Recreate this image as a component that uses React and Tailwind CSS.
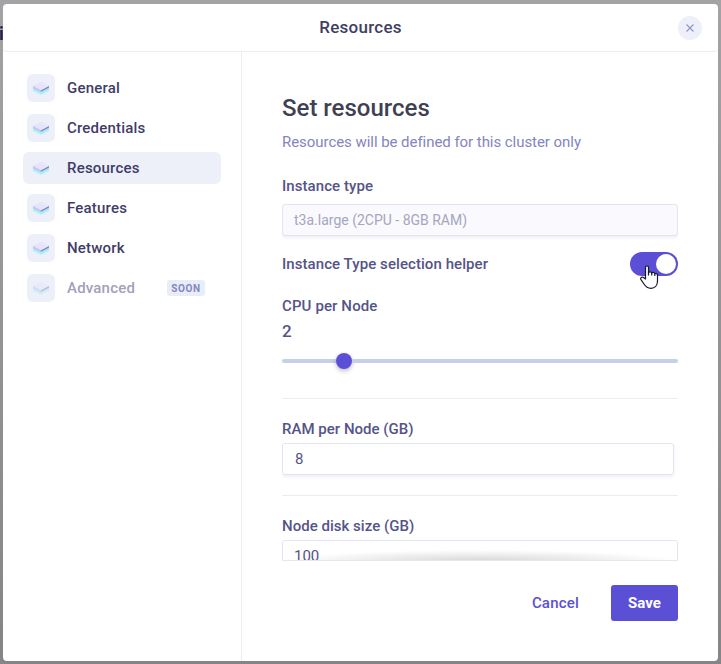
import React from 'react';

const sections = [
  { name: 'General' },
  { name: 'Credentials' },
  { name: 'Resources', active: true },
  { name: 'Features' },
  { name: 'Network' },
  { name: 'Advanced', soon: true },
];

function LayersIcon({ faded }) {
  return (
    <svg width="16" height="14" viewBox="0 0 16 14" className={faded ? 'opacity-50' : ''}>
      <path d="M0 6 8 10l8-4v4L8 14 0 10z" fill="#b8f0f2" />
      <path d="M0 6 8 10l8-4v2L8 12 0 8z" fill="#a3dff1" />
      <path d="M0 4.800 8 9v1.800L0 6.600z" fill="#c3bdf5" />
      <path d="M16 4.800 8 9v1.600l8-4.200z" fill="#7f7cbd" />
      <path d="M8 .5l8 4.500-8 4.200L0 5z" fill="#e6e3fb" />
    </svg>
  );
}

function Sidebar() {
  return (
    <nav className="flex w-[239px] shrink-0 flex-col gap-2 border-r border-[#ededf3] pl-5 pr-5 pt-5">
      {sections.map((s) => (
        <div
          key={s.name}
          className={`flex h-8 items-center rounded-md pl-1 ${s.active ? 'bg-[#edf0f8]' : ''}`}
        >
          <span className="flex h-7 w-7 items-center justify-center rounded-md bg-[#edf0f8]">
            <LayersIcon faded={s.soon} />
          </span>
          <span
            className={`ml-3 text-[15px] font-medium leading-5 tracking-[0.2px] ${s.soon ? 'text-[#a1a1b9]' : 'text-[#3f3d68]'}`}
          >
            {s.name}
          </span>
          {s.soon && (
            <span className="ml-auto mr-4 flex h-4 w-[38px] items-center justify-center rounded-[3px] bg-[#e9edf7] text-[10px] font-bold tracking-[0.6px] text-[#8585c5]">
              SOON
            </span>
          )}
        </div>
      ))}
    </nav>
  );
}

function Toggle() {
  return (
    <div className="relative flex h-6 w-12 items-center justify-end rounded-full bg-[#5b4fd6] pr-0.5">
      <span className="h-5 w-5 rounded-full bg-white" />
      <svg className="absolute left-[10px] top-[13px]" width="19" height="24" viewBox="0 0 19 24">
        <path
          d="M5.500 14V2.200C5.500 .3 8.500 .3 8.500 2.200V7.500C9.500 6.300 11.500 6.700 11.700 8 12.800 7 14.500 7.500 14.800 8.800 16.200 8 17.500 9 17.500 10.300V16C17.500 20.500 14.800 23.300 11 23.300 7.500 23.300 5.500 21.500 4 19L.8 14.300C.2 12.800 2 11.500 3.500 12.600z"
          fill="#fff"
          stroke="#17172b"
          strokeWidth="1.200"
          strokeLinejoin="round"
        />
        <path d="M8.500 7v3.500M11.700 8v2.500M14.800 9v2" stroke="#17172b" strokeWidth="1.200" fill="none" />
      </svg>
    </div>
  );
}

const label = 'text-[15px] font-medium leading-5 text-[#555487]';

function ResourceForm() {
  return (
    <div className="h-[509px] overflow-hidden border-b border-[#e6e6ef] pt-10">
      <h1 className="text-2xl font-medium leading-8 text-[#403f56]">Set resources</h1>
      <p className="mt-2 text-[15px] leading-5 tracking-[-0.05px] text-[#8484c1]">
        Resources will be defined for this cluster only
      </p>
      <div className={`mt-6 tracking-[0.07px] ${label}`}>Instance type</div>
      <div className="mt-2 flex h-8 items-center rounded-[3px] border border-[#e2e5f1] bg-[#f9f9fe] px-[11px] text-sm text-[#a6a6bd] shadow-[0_2px_3px_rgba(60,60,110,0.08)]">
        t3a.large (2CPU - 8GB RAM)
      </div>
      <div className="mt-4 flex h-6 items-center justify-between">
        <span className={`tracking-[0.07px] ${label}`}>Instance Type selection helper</span>
        <Toggle />
      </div>
      <div className={`mt-5 tracking-[0.12px] ${label}`}>CPU per Node</div>
      <div className="mt-[5px] text-[17px] font-medium leading-5 text-[#555487]">2</div>
      <div className="mt-3 flex h-4 items-center">
        <span className="h-1 w-[54px] rounded-l-full bg-[#c5cfe7]" />
        <span className="h-4 w-4 rounded-full bg-[#5b4fd6] shadow-[0_2px_4px_rgba(30,30,60,0.3)]" />
        <span className="h-1 flex-1 rounded-r-full bg-[#c5cfe7]" />
      </div>
      <div className="mt-[29px] border-t border-[#ececf4] pt-5">
        <div className={`tracking-[0.02px] ${label}`}>RAM per Node (GB)</div>
        <div className="mr-1 mt-1 flex h-8 items-center rounded-[3px] border border-[#e2e5f1] px-3 text-[15px] text-[#555487] shadow-[0_2px_3px_rgba(60,60,110,0.08)]">
          8
        </div>
      </div>
      <div className="mt-5 border-t border-[#ececf4] pt-5">
        <div className={`tracking-[0.02px] ${label}`}>Node disk size (GB)</div>
        <div className="relative mt-1 flex h-8 items-center rounded-[3px] border border-[#e2e5f1] px-[11px] text-[15px] text-[#555487]">
          100
          <div className="absolute inset-x-0 top-[9px] h-[11px] bg-[radial-gradient(ellipse_50%_100%_at_50%_100%,rgba(0,0,0,0.16),rgba(0,0,0,0))]" />
        </div>
      </div>
    </div>
  );
}

export default function App() {
  return (
    <div className="relative flex h-[664px] w-[721px] overflow-hidden bg-linear-to-b from-[#a3a3a5] to-[#858587] px-[3px] pb-[3px] pt-1 font-['Roboto',sans-serif]">
      <span className="absolute left-[-1px] top-[22px] text-lg font-bold leading-6 text-[#25254b]">i</span>
      <div className="relative flex flex-1 flex-col overflow-hidden rounded-[4px] bg-white">
        <header className="relative flex h-12 shrink-0 items-center justify-center rounded-b-[4px] border-b border-[#ececf0]">
          <h2 className="-mt-px text-[17px] font-medium leading-6 tracking-[0.25px] text-[#403f62]">Resources</h2>
          <button className="absolute right-4 top-3 flex h-6 w-6 items-center justify-center rounded-full bg-[#edf0f8]">
            <svg width="8" height="8" viewBox="0 0 8 8" stroke="#8b9ac0" strokeWidth="1.200">
              <path d="M.5.5l7 7M7.500.5l-7 7" />
            </svg>
          </button>
        </header>
        <div className="flex flex-1">
          <Sidebar />
          <main className="flex-1 px-10">
            <ResourceForm />
            <div className="mt-6 flex justify-end gap-4">
              <button className="h-9 px-4 text-[15px] font-medium tracking-[0.2px] text-[#5b4fd6]">Cancel</button>
              <button className="h-9 w-[67px] rounded-[3px] bg-[#5b4fd6] text-[15px] font-bold text-white">Save</button>
            </div>
          </main>
        </div>
      </div>
    </div>
  );
}
